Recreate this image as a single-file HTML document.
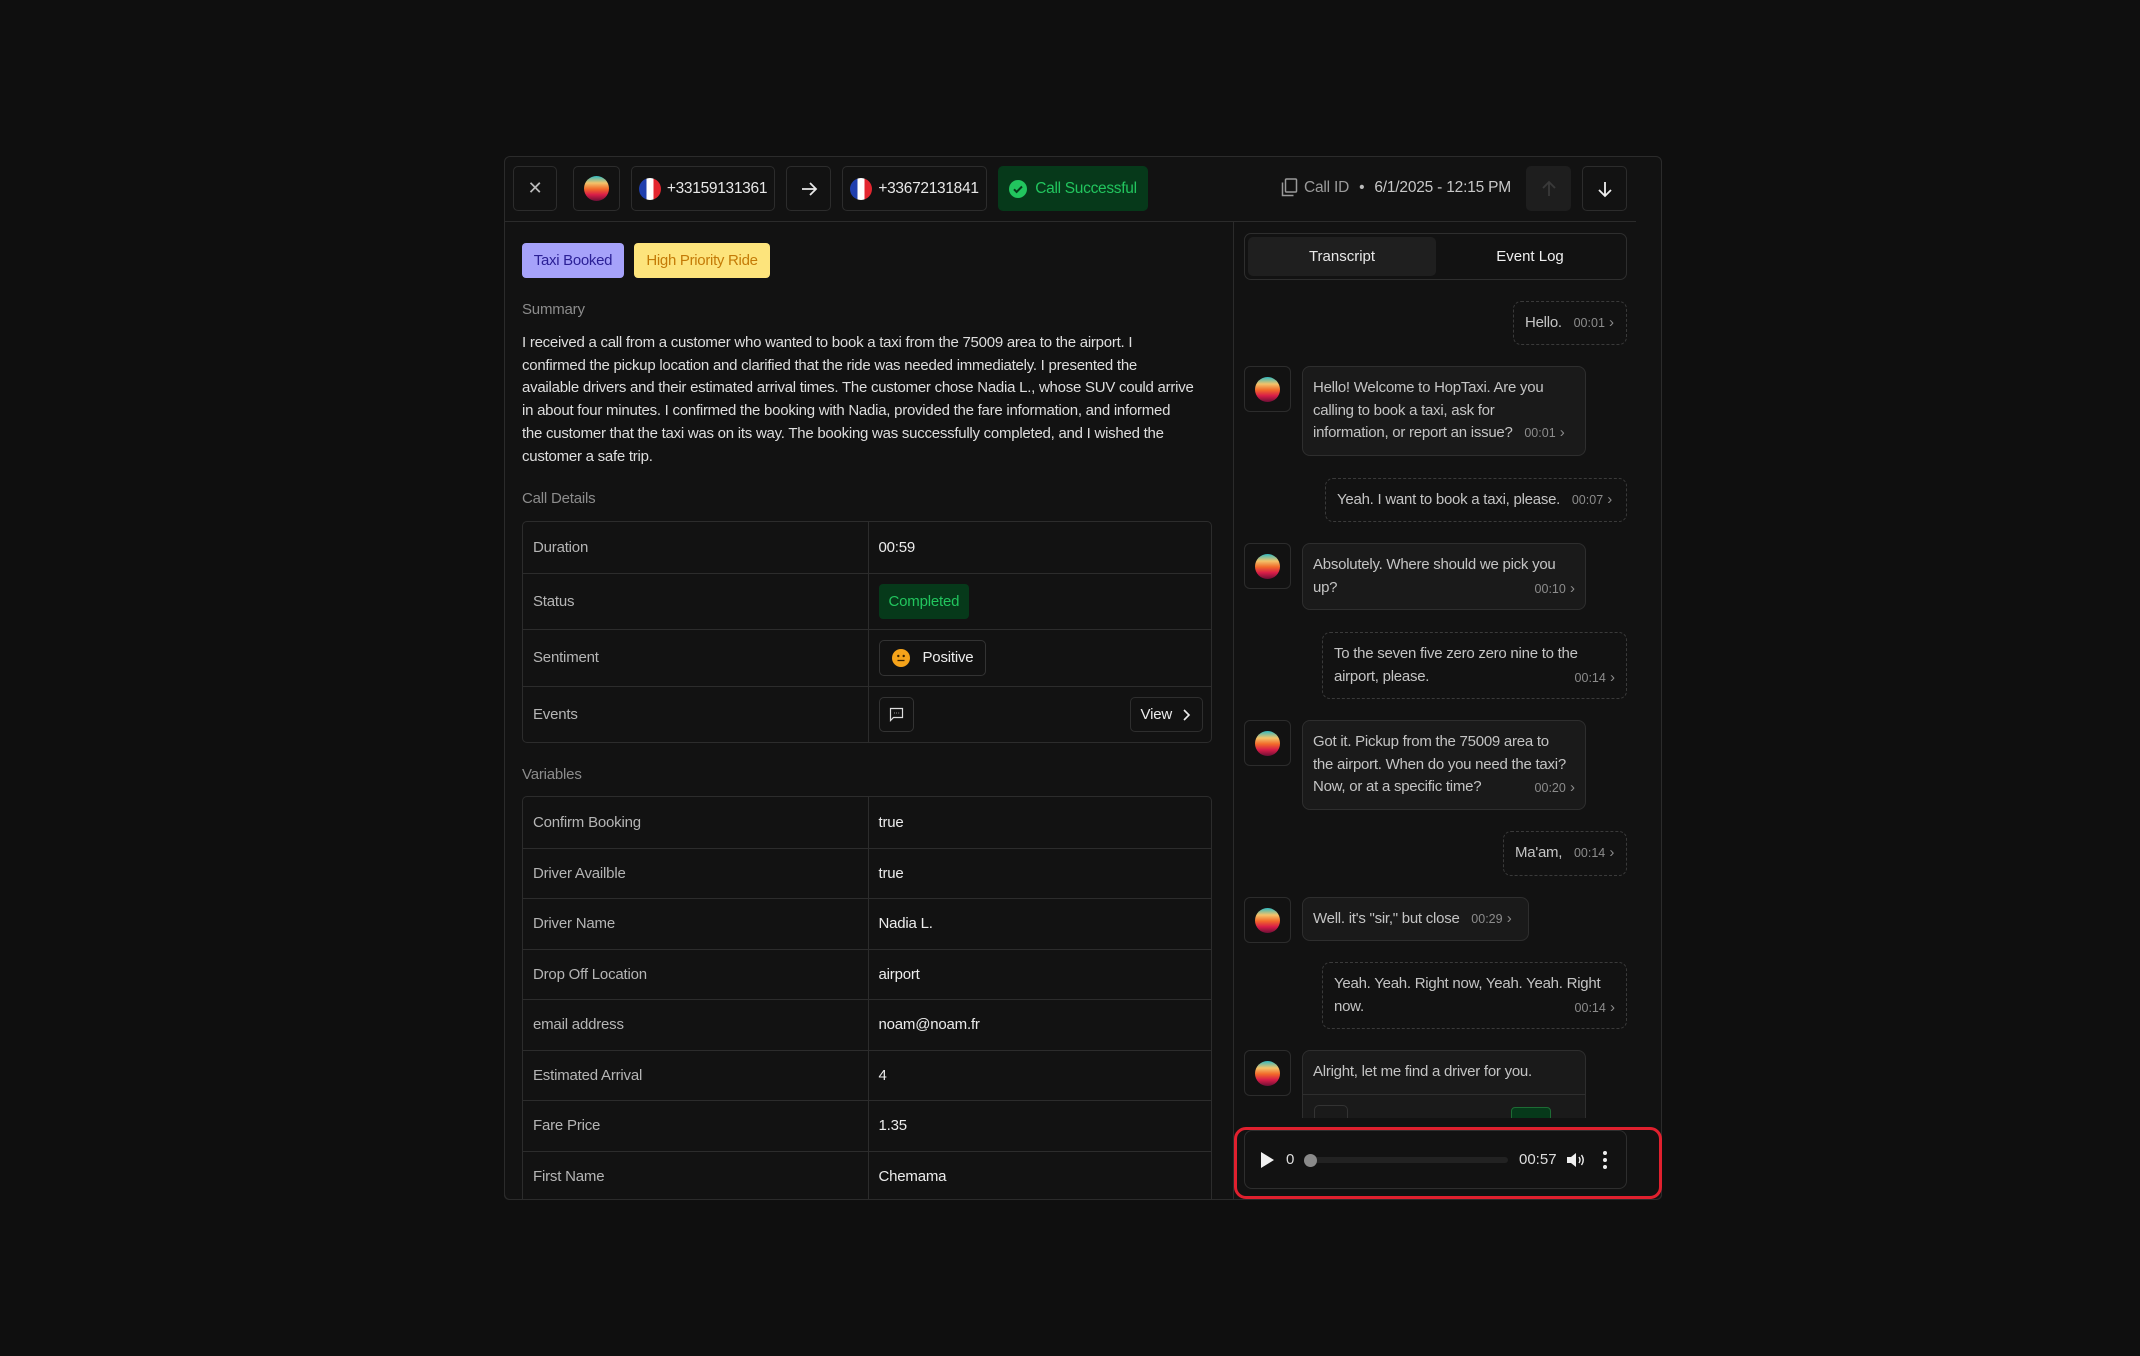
<!DOCTYPE html>
<html><head><meta charset="utf-8"><style>
*{box-sizing:border-box;margin:0;padding:0}
body{width:2140px;height:1356px;background:#0f0f0f;font-family:"Liberation Sans",sans-serif;position:relative;overflow:hidden;color:#e6e6e6}
.a{position:absolute}
.panel{left:504px;top:156px;width:1158px;height:1044px;background:#121212;border:1px solid #2b2b2b;border-radius:6px;overflow:hidden}
.btn{position:absolute;top:166px;height:45px;border:1px solid #2c2c2c;border-radius:5px;background:#121212;display:flex;align-items:center;justify-content:center;font-size:15.5px;color:#e8e8e8;letter-spacing:-0.3px}
.flag{width:22px;height:22px;border-radius:50%;background:linear-gradient(90deg,#1f3fae 0 33%,#fff 33% 67%,#e3262f 67%);margin-right:6px}
.orb{border-radius:50%;background:linear-gradient(180deg,#2fb9c0 0,#f3c36a 28%,#f26a2a 52%,#d81d48 75%,#6e0f36 100%)}
.tag{position:absolute;top:243px;height:35px;border-radius:4px;font-size:15px;display:flex;align-items:center;justify-content:center;letter-spacing:-0.3px}
.lbl{position:absolute;left:522px;font-size:15px;color:#8c8c8c;letter-spacing:-0.2px}
.sum{position:absolute;left:522px;top:332px;font-size:15px;line-height:22.7px;color:#dedede;letter-spacing:-0.25px;white-space:nowrap}
table{position:absolute;left:522px;width:690px;border-collapse:collapse;font-size:15px;letter-spacing:-0.2px}
td{border:1px solid #2c2c2c;padding:0 10px;vertical-align:middle}
td:first-child{width:345px;color:#b5b5b5}
td:last-child{color:#ececec}
.tw{position:absolute;left:522px;width:690px;border:1px solid #2c2c2c;border-radius:5px;overflow:hidden}
.tw table{position:static;width:100%}
.tw tr:first-child td{border-top:none}
.tw td:first-child{border-left:none}
.tw td:last-child{border-right:none}
.bub{position:absolute;border:1px solid #2e2e2e;border-radius:8px;background:#1a1a1a;font-size:15px;line-height:22.7px;color:#c4c4c4;padding:10px 10px 10px 10px;letter-spacing:-0.25px;white-space:nowrap}
.ub{position:absolute;border:1px dashed #3a3a3a;border-radius:8px;font-size:15px;line-height:22.7px;color:#c4c4c4;padding:10px 11px;letter-spacing:-0.25px;white-space:nowrap}
.ts{font-size:12.5px;color:#8c8c8c;white-space:nowrap;letter-spacing:0}
.ts:after{content:" ›";font-size:15px}
.r{float:right;margin-top:1px}
.av{position:absolute;left:1244px;width:47px;height:46px;border:1px solid #2c2c2c;border-radius:6px;display:flex;align-items:center;justify-content:center}
.av i{display:block;width:25px;height:25px}
</style></head><body>
<div class="a panel"></div>
<div class="a" style="left:504px;top:221px;width:1132px;height:1px;background:#2b2b2b"></div>
<div class="a" style="left:1233px;top:222px;width:1px;height:977px;background:#2b2b2b"></div>

<div class="btn" style="left:513px;width:44px;color:#bbb;font-size:18px">✕</div>
<div class="btn" style="left:573px;width:47px"><i class="orb" style="width:25px;height:25px;display:block"></i></div>
<div class="btn" style="left:631px;width:144px"><i class="flag"></i>+33159131361</div>
<div class="btn" style="left:786px;width:45px"><svg width="18" height="18" viewBox="0 0 18 18" fill="none" stroke="#e8e8e8" stroke-width="1.8"><path d="M2 9h14M10 3l6 6-6 6"/></svg></div>
<div class="btn" style="left:842px;width:145px"><i class="flag"></i>+33672131841</div>
<div class="btn" style="left:998px;width:150px;background:#06391a;border-color:#06391a;color:#22c55e"><svg width="18" height="18" viewBox="0 0 18 18" style="margin-right:8px"><circle cx="9" cy="9" r="9" fill="#22c55e"/><path d="M5 9.3l2.6 2.6L13 6.5" stroke="#06391a" stroke-width="2" fill="none"/></svg>Call Successful</div>

<div class="a" style="left:1281px;top:178px;font-size:15.5px;color:#9a9a9a;display:flex;align-items:center;letter-spacing:-0.2px"><svg width="17" height="19" viewBox="0 0 17 19" fill="none" stroke="#9a9a9a" stroke-width="1.5"><rect x="4.5" y="1" width="11" height="13" rx="1"/><path d="M1.5 4.5v13h11"/></svg><span style="margin-left:6px">Call ID</span><span style="margin:0 10px;color:#bbb">•</span><span style="color:#c8c8c8">6/1/2025 - 12:15 PM</span></div>
<div class="btn" style="left:1526px;width:45px;background:#1e1e1e;border-color:#1e1e1e"><svg width="18" height="18" viewBox="0 0 18 18" fill="none" stroke="#3a3a3a" stroke-width="1.8"><path d="M9 16V2M3 8l6-6 6 6"/></svg></div>
<div class="btn" style="left:1582px;width:45px"><svg width="18" height="18" viewBox="0 0 18 18" fill="none" stroke="#eee" stroke-width="1.8"><path d="M9 2v14M3 10l6 6 6-6"/></svg></div>

<div class="tag" style="left:522px;width:102px;background:#a6a2fa;color:#2b2096">Taxi Booked</div>
<div class="tag" style="left:634px;width:136px;background:#fde47c;color:#c47a06">High Priority Ride</div>
<div class="lbl" style="top:301px">Summary</div>
<div class="sum">I received a call from a customer who wanted to book a taxi from the 75009 area to the airport. I<br>confirmed the pickup location and clarified that the ride was needed immediately. I presented the<br>available drivers and their estimated arrival times. The customer chose Nadia L., whose SUV could arrive<br>in about four minutes. I confirmed the booking with Nadia, provided the fare information, and informed<br>the customer that the taxi was on its way. The booking was successfully completed, and I wished the<br>customer a safe trip.</div>
<div class="lbl" style="top:490px">Call Details</div>
<div class="tw" style="top:521px;height:222px"><table>
<tr style="height:51px"><td>Duration</td><td>00:59</td></tr>
<tr style="height:56px"><td>Status</td><td><span style="display:inline-block;background:#06391a;color:#22c55e;border-radius:4px;padding:9px 10px">Completed</span></td></tr>
<tr style="height:57px"><td>Sentiment</td><td><span style="display:inline-flex;align-items:center;border:1px solid #333;border-radius:5px;padding:8px 12px 8px 12px"><svg width="18" height="18" viewBox="0 0 18 18" style="margin-right:13px"><circle cx="9" cy="9" r="9" fill="#f5a31a"/><circle cx="6.3" cy="7" r="1.2" fill="#3a2200"/><circle cx="11.7" cy="7" r="1.2" fill="#3a2200"/><path d="M5.5 11.5h7" stroke="#3a2200" stroke-width="1.3"/></svg>Positive</span></td></tr>
<tr style="height:57px"><td>Events</td><td><span style="display:inline-flex;width:35px;height:35px;border:1px solid #333;border-radius:5px;align-items:center;justify-content:center;vertical-align:middle"><svg width="15" height="15" viewBox="0 0 15 15" fill="none" stroke="#ddd" stroke-width="1.2"><path d="M1.5 1.5h12v9h-9l-3 3z"/><path d="M5 6h.5M7.3 6h.5M9.6 6h.5"/></svg></span><span style="float:right;display:inline-flex;align-items:center;border:1px solid #2e2e2e;border-radius:5px;height:35px;padding:0 10px;margin-right:-2px">View<svg width="12" height="14" viewBox="0 0 12 14" style="margin-left:8px" fill="none" stroke="#eee" stroke-width="1.6"><path d="M4 2l5 5-5 5"/></svg></span></td></tr>
</table></div>
<div class="lbl" style="top:766px">Variables</div>
<div class="tw" style="top:796px;height:420px;border-bottom:none"><table>
<tr style="height:51px"><td>Confirm Booking</td><td>true</td></tr>
<tr style="height:50px"><td>Driver Availble</td><td>true</td></tr>
<tr style="height:51px"><td>Driver Name</td><td>Nadia L.</td></tr>
<tr style="height:50px"><td>Drop Off Location</td><td>airport</td></tr>
<tr style="height:51px"><td>email address</td><td>noam@noam.fr</td></tr>
<tr style="height:50px"><td>Estimated Arrival</td><td>4</td></tr>
<tr style="height:51px"><td>Fare Price</td><td>1.35</td></tr>
<tr style="height:51px"><td>First Name</td><td>Chemama</td></tr>
</table></div>
<div class="a" style="left:505px;top:1199px;width:1156px;height:30px;background:#0f0f0f"></div>
<div class="a" style="left:504px;top:1195px;width:1158px;height:5px;border:1px solid #2b2b2b;border-top:none;border-radius:0 0 6px 6px"></div>

<!-- right -->
<div class="a" style="left:1244px;top:233px;width:383px;height:47px;border:1px solid #2e2e2e;border-radius:7px"></div>
<div class="a" style="left:1248px;top:237px;width:188px;height:39px;background:#1f1f1f;border-radius:5px;display:flex;align-items:center;justify-content:center;font-size:15px;color:#e8e8e8">Transcript</div>
<div class="a" style="left:1436px;top:237px;width:188px;height:39px;display:flex;align-items:center;justify-content:center;font-size:15px;color:#f0f0f0">Event Log</div>

<div style="position:absolute;left:1234px;top:282px;width:400px;height:836px;overflow:hidden">
<div style="position:relative;left:-1234px;top:-282px">
<div class="ub" style="left:1513px;top:301px;width:114px;height:44px">Hello.&nbsp;&nbsp; <span class="ts">00:01</span></div>
<div class="av" style="top:366px"><i class="orb"></i></div>
<div class="bub" style="left:1302px;top:366px;width:284px;height:90px">Hello! Welcome to HopTaxi. Are you<br>calling to book a taxi, ask for<br>information, or report an issue?&nbsp;&nbsp; <span class="ts">00:01</span></div>
<div class="ub" style="left:1325px;top:478px;width:302px;height:44px">Yeah. I want to book a taxi, please.&nbsp;&nbsp; <span class="ts">00:07</span></div>
<div class="av" style="top:543px"><i class="orb"></i></div>
<div class="bub" style="left:1302px;top:543px;width:284px;height:67px">Absolutely. Where should we pick you<br>up?<span class="ts r">00:10</span></div>
<div class="ub" style="left:1322px;top:632px;width:305px;height:67px">To the seven five zero zero nine to the<br>airport, please.<span class="ts r">00:14</span></div>
<div class="av" style="top:720px"><i class="orb"></i></div>
<div class="bub" style="left:1302px;top:720px;width:284px;height:90px">Got it. Pickup from the 75009 area to<br>the airport. When do you need the taxi?<br>Now, or at a specific time?<span class="ts r">00:20</span></div>
<div class="ub" style="left:1503px;top:831px;width:124px;height:45px">Ma'am,&nbsp;&nbsp; <span class="ts">00:14</span></div>
<div class="av" style="top:897px"><i class="orb"></i></div>
<div class="bub" style="left:1302px;top:897px;width:227px;height:44px">Well. it's "sir," but close&nbsp;&nbsp; <span class="ts">00:29</span></div>
<div class="ub" style="left:1322px;top:962px;width:305px;height:67px">Yeah. Yeah. Right now, Yeah. Yeah. Right<br>now.<span class="ts r">00:14</span></div>
<div class="av" style="top:1050px"><i class="orb"></i></div>
<div class="bub" style="left:1302px;top:1050px;width:284px;height:100px;padding:0">
<div style="padding:10px 10px;height:44px;border-bottom:1px solid #2e2e2e">Alright, let me find a driver for you.</div>
<div style="position:absolute;left:11px;top:54px;width:34px;height:30px;border:1px solid #333;border-radius:5px"></div>
<div style="position:absolute;left:208px;top:56px;width:40px;height:26px;border:1px solid #1d6b34;background:#06391a;border-radius:4px"></div>
</div>
</div></div>

<!-- player -->
<div class="a" style="left:1244px;top:1130px;width:383px;height:59px;border:1px solid #2e2e2e;border-radius:8px"></div>
<div class="a" style="left:1234px;top:1127px;width:428px;height:72px;border:3px solid #e0202e;border-radius:12px"></div>
<svg class="a" style="left:1260px;top:1151px" width="15" height="18" viewBox="0 0 15 18"><path d="M1 1l13 8-13 8z" fill="#f0f0f0"/></svg>
<div class="a" style="left:1286px;top:1151px;font-size:15px;color:#ddd">0</div>
<div class="a" style="left:1305px;top:1157px;width:203px;height:6px;background:#222;border-radius:3px"></div>
<div class="a" style="left:1304px;top:1154px;width:13px;height:13px;background:#8a8a8a;border-radius:50%"></div>
<div class="a" style="left:1519px;top:1151px;font-size:15px;color:#ddd">00:57</div>
<svg class="a" style="left:1566px;top:1151px" width="20" height="18" viewBox="0 0 20 18"><path d="M1 6h4l5-4v14l-5-4H1z" fill="#eee"/><path d="M13 6q2 3 0 6M15.5 4q3.5 5 0 10" stroke="#eee" stroke-width="1.4" fill="none"/></svg>
<svg class="a" style="left:1602px;top:1150px" width="6" height="20" viewBox="0 0 6 20"><circle cx="3" cy="3" r="2" fill="#eee"/><circle cx="3" cy="10" r="2" fill="#eee"/><circle cx="3" cy="17" r="2" fill="#eee"/></svg>
</body></html>
